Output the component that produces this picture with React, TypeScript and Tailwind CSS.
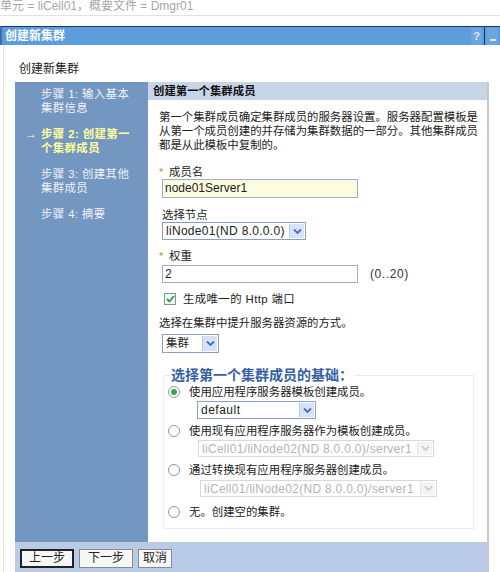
import React from 'react';

const FONT = { fontFamily: '"Liberation Sans", "Noto Sans CJK SC", sans-serif' };

const Chevron: React.FC<{ dim?: boolean }> = ({ dim }) => (
    <span className={`flex items-center justify-center w-[15px] h-full border-l ${dim ? 'border-[#e4e4e4] bg-[#f4f4f4]' : 'border-[#b8c8e8] bg-[#d6e2f7]'}`}>
        <svg width="9" height="7" viewBox="0 0 9 7">
            <path d="M1 1.5 4.5 5 8 1.5" fill="none" stroke={dim ? '#c8d0dc' : '#4d6fb0'} strokeWidth="1.8" />
        </svg>
    </span>
);

const Select: React.FC<{ value: string; className: string; dim?: boolean }> = ({ value, className, dim }) => (
    <div className={`flex items-stretch border ${dim ? 'border-[#d8d8d8] text-[#b4b4b4]' : 'border-[#8aa0c0] text-[#222]'} bg-white ${className}`}>
        <span className="flex-1 pl-[3px] pt-[1px] leading-[15px] whitespace-nowrap overflow-hidden">{value}</span>
        <div className="p-[1px]"><Chevron dim={dim} /></div>
    </div>
);

const Radio: React.FC<{ checked?: boolean }> = ({ checked }) => (
    <span className="flex items-center justify-center w-[12px] h-[12px] rounded-full border border-[#8a9aa8] bg-white">
        {checked && <span className="w-[6px] h-[6px] rounded-full bg-[#3ca83c]" />}
    </span>
);

const steps = [
    { lines: ['步骤 1: 输入基本', '集群信息'], active: false },
    { lines: ['步骤 2: 创建第一', '个集群成员'], active: true },
    { lines: ['步骤 3: 创建其他', '集群成员'], active: false },
    { lines: ['步骤 4: 摘要'], active: false },
];

const App: React.FC = () => {
    return (
        <div className="w-[500px] h-[572px] bg-white overflow-hidden text-[11.4px] text-[#222]" style={FONT}>
            {/* breadcrumb */}
            <div className="h-[17px] border-b border-[#e2e2e2] text-[#a6a6a6] text-[12px] leading-[14px] -mt-[1px] whitespace-nowrap">
                单元 = liCell01，概要文件 = Dmgr01
            </div>

            {/* title bar */}
            <div className="mt-[10px] h-[19px] flex items-center bg-[#5d9ddd] border-t border-[#1b355e] border-l-2 border-l-[#3d6ea8]">
                <span className="flex-1 pl-[3px] text-white font-bold text-[12px] leading-[17px]">创建新集群</span>
                <span className="w-[11px] h-[17px] flex items-center justify-center text-[#d9e8f8] font-bold text-[11px] bg-[#6ca5df]">?</span>
                <span className="w-[1px] h-[18px] bg-[#1b355e] mx-[2px]" />
                <span className="w-[11px] h-[17px] flex items-end justify-center pb-[4px] bg-[#6ca5df] mr-[2px]">
                    <span className="w-[6px] h-[2px] bg-[#d9e8f8]" />
                </span>
            </div>

            {/* page body */}
            <div className="border-l border-[#e6e6e6] ml-[3px] pl-[11px] pr-[11px]">
                <div className="h-[37px] pt-[17px] pl-[4px] text-[12px] leading-[14px] text-[#222]">创建新集群</div>

                <div className="flex h-[460px]">
                    {/* steps */}
                    <div className="w-[133px] bg-[#7497c1] pt-[5px] text-[#eef2f8] tracking-[0.4px]">
                        {steps.map((s, i) => (
                            <div key={i} className={`flex leading-[14px] ${i === 0 ? '' : 'mt-[12px]'} ${s.active ? 'text-[#ffff9a] font-bold' : ''}`}>
                                <span className="w-[26px] pl-[10px] text-[12px]">{s.active ? '→' : ''}</span>
                                <div>
                                    {s.lines.map(l => <div key={l} className="whitespace-nowrap">{l}</div>)}
                                </div>
                            </div>
                        ))}
                    </div>

                    {/* form */}
                    <div className="flex-1 border-r-2 border-[#c6c6c6]">
                        <div className="h-[18px] bg-[#c7d5e8] pl-[5px] font-bold leading-[18px] text-[#111]">创建第一个集群成员</div>
                        <div className="pl-[11px] pr-[5px]">
                            <p className="mt-[10px] leading-[14px]">
                                第一个集群成员确定集群成员的服务器设置。服务器配置模板是从第一个成员创建的并存储为集群数据的一部分。其他集群成员都是从此模板中复制的。
                            </p>

                            <div className="mt-[13px] leading-[14px] flex">
                                <span className="text-[#b09a2c] w-[10px]">*</span>成员名
                            </div>
                            <div className="ml-[3px] w-[196px] h-[19px] border border-[#a0b0c0] bg-[#fdfbe0] pl-[2px] leading-[17px] text-[12px]">node01Server1</div>

                            <div className="mt-[10px] ml-[3px] leading-[14px]">选择节点</div>
                            <Select value="liNode01(ND 8.0.0.0)" className="ml-[3px] w-[144px] h-[18px] text-[12px] tracking-[0.3px]" />

                            <div className="mt-[9px] leading-[14px] flex">
                                <span className="text-[#b09a2c] w-[10px]">*</span>权重
                            </div>
                            <div className="flex items-center mt-[2px]">
                                <div className="ml-[3px] w-[196px] h-[18px] border border-[#a0b0c0] bg-white pl-[2px] leading-[16px] text-[12px]">2</div>
                                <span className="ml-[12px] text-[12px] tracking-[0.6px] text-[#333]">(0..20)</span>
                            </div>

                            <div className="flex items-center mt-[9px] ml-[5px]">
                                <span className="w-[12px] h-[12px] border border-[#7b93a8] bg-[#f4f8f4] flex items-center justify-center">
                                    <svg width="9" height="8" viewBox="0 0 9 8"><path d="M1 4 3.5 6.5 8 1" fill="none" stroke="#2e9a2e" strokeWidth="1.8" /></svg>
                                </span>
                                <span className="ml-[7px] leading-[14px] tracking-[0.4px]">生成唯一的 Http 端口</span>
                            </div>

                            <div className="mt-[10px] leading-[14px]">选择在集群中提升服务器资源的方式。</div>
                            <Select value="集群" className="ml-[3px] mt-[4px] w-[57px] h-[19px]" />

                            <fieldset className="mt-[14px] ml-[4px] w-[311px] h-[162px] border border-[#ececec] pl-[4px]">
                                <legend className="ml-[2px] px-[1px] text-[14px] font-bold text-[#3560a4] leading-[16px]">选择第一个集群成员的基础：</legend>
                                <div className="flex items-center mt-[2px] leading-[14px]">
                                    <Radio checked />
                                    <span className="ml-[9px]">使用应用程序服务器模板创建成员。</span>
                                </div>
                                <Select value="default" className="ml-[29px] mt-[2px] w-[119px] h-[18px] text-[12px] tracking-[0.5px]" />
                                <div className="flex items-center mt-[5px] leading-[14px]">
                                    <Radio />
                                    <span className="ml-[9px]">使用现有应用程序服务器作为模板创建成员。</span>
                                </div>
                                <Select dim value="liCell01/liNode02(ND 8.0.0.0)/server1" className="ml-[30px] mt-[2px] w-[236px] h-[17px] text-[12px] tracking-[0.3px]" />
                                <div className="flex items-center mt-[6px] leading-[14px]">
                                    <Radio />
                                    <span className="ml-[9px]">通过转换现有应用程序服务器创建成员。</span>
                                </div>
                                <Select dim value="liCell01/liNode02(ND 8.0.0.0)/server1" className="ml-[32px] mt-[3px] w-[237px] h-[17px] text-[12px] tracking-[0.3px]" />
                                <div className="flex items-center mt-[8px] leading-[14px]">
                                    <Radio />
                                    <span className="ml-[9px]">无。创建空的集群。</span>
                                </div>
                            </fieldset>
                        </div>
                    </div>
                </div>

                {/* footer */}
                <div className="h-[40px] bg-[#b9cbe7] border-r-2 border-[#c6c6c6] flex items-start pt-[7px] pl-[5px] gap-[5px]">
                    <button className="h-[19px] px-[7px] bg-[#f7f7f7] border-2 border-[#222] text-[12px] leading-[15px]">上一步</button>
                    <button className="h-[19px] px-[8px] bg-[#f7f7f7] border border-[#8a8a8a] text-[12px] leading-[17px]">下一步</button>
                    <button className="h-[19px] px-[4px] bg-[#f7f7f7] border border-[#8a8a8a] text-[12px] leading-[17px]">取消</button>
                </div>
            </div>
        </div>
    );
};

export default App;
